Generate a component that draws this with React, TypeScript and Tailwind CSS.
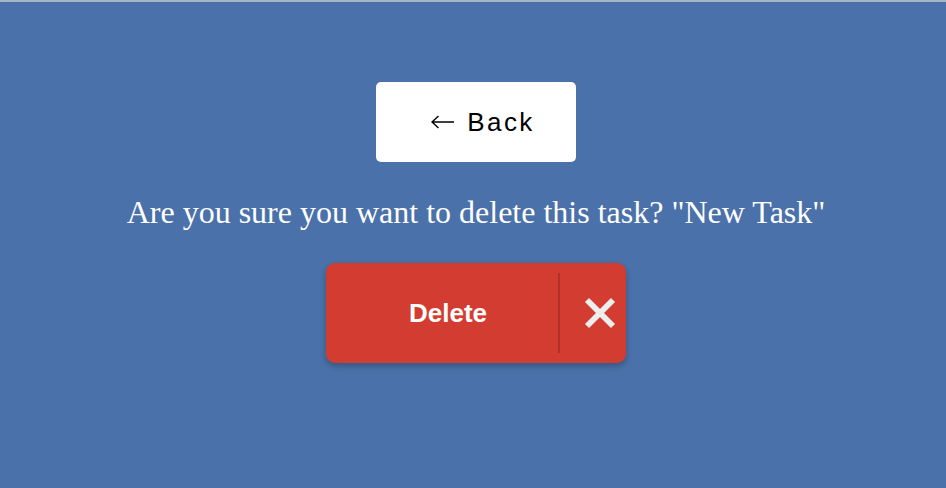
export default function App() {
  return (
    <div className="h-[488px] w-[946px] overflow-hidden bg-[#4a71a9]">
      <div className="h-[2px] bg-[#a9b3c6]" />
      <div className="flex flex-col items-center pl-[6px] pt-[80px]">
        <button className="flex h-[80px] w-[200px] items-center justify-center gap-[13px] rounded-[5px] bg-white pl-[14px] text-black">
          <svg width="23" height="14" viewBox="0 0 23 14" fill="none" stroke="#000" strokeWidth="1.4">
            <path d="M1 7h22M7.5 1L1 7l6.5 6" />
          </svg>
          <span className="font-['Liberation_Sans',Arial,sans-serif] text-[26px] tracking-[2.4px]">Back</span>
        </button>
        <p className="mt-[32px] font-['Liberation_Serif','Times_New_Roman',serif] text-[32px] leading-[36px] text-white">
          Are you sure you want to delete this task? "New Task"
        </p>
        <div className="mt-[33px] flex h-[100px] w-[300px] items-stretch overflow-hidden rounded-[9px] bg-[#d33c30] shadow-[0_3px_6px_rgba(0,0,0,0.25)]">
          <button className="flex w-[232px] items-center justify-center pl-[12px] font-['Liberation_Sans',Arial,sans-serif] text-[26px] font-bold text-white">
            Delete
          </button>
          <div className="my-[10px] w-[2px] bg-[#b3302a]" />
          <button className="flex flex-1 items-center justify-center pl-[14px]">
            <svg width="32" height="32" viewBox="0 0 32 32" stroke="#eeeeee" strokeWidth="5.8" strokeLinecap="butt">
              <path d="M3 3l26 26M29 3L3 29" />
            </svg>
          </button>
        </div>
      </div>
    </div>
  );
}
